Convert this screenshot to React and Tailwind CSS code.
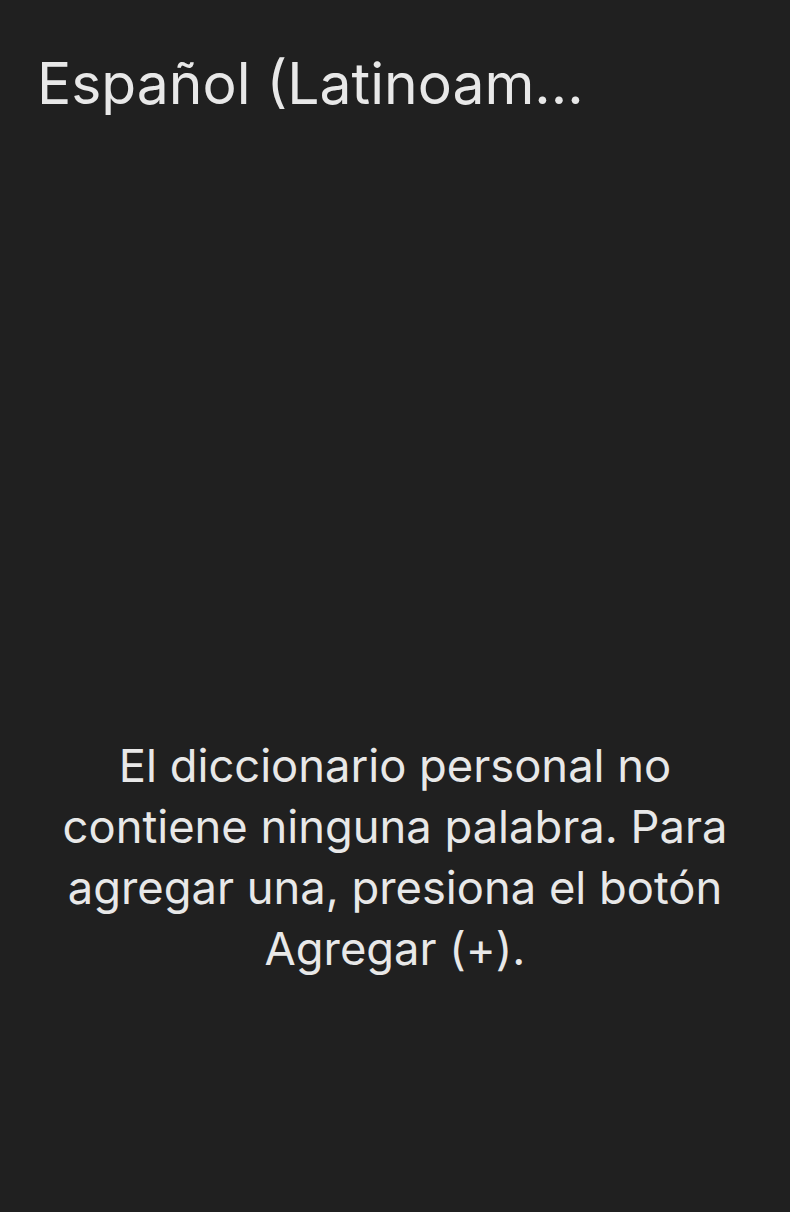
export default function App() {
  return (
    <div
      className="w-[790px] h-[1212px] bg-[#202020] text-[#e8e8e8] flex flex-col overflow-hidden"
      style={{ fontFamily: 'Inter, "Noto Sans", sans-serif' }}
    >
      <div className="pl-[37px] pt-[42px] text-[57px] leading-[84px] whitespace-nowrap">
        Español (Latinoam...
      </div>
      <div className="flex-1 flex flex-col items-center pt-[609px]">
        <p className="text-center text-[45.3px] leading-[61px] px-[40px]">
          El diccionario personal no
          <br />
          contiene ninguna palabra. Para
          <br />
          agregar una, presiona el botón
          <br />
          Agregar (+).
        </p>
      </div>
    </div>
  );
}
